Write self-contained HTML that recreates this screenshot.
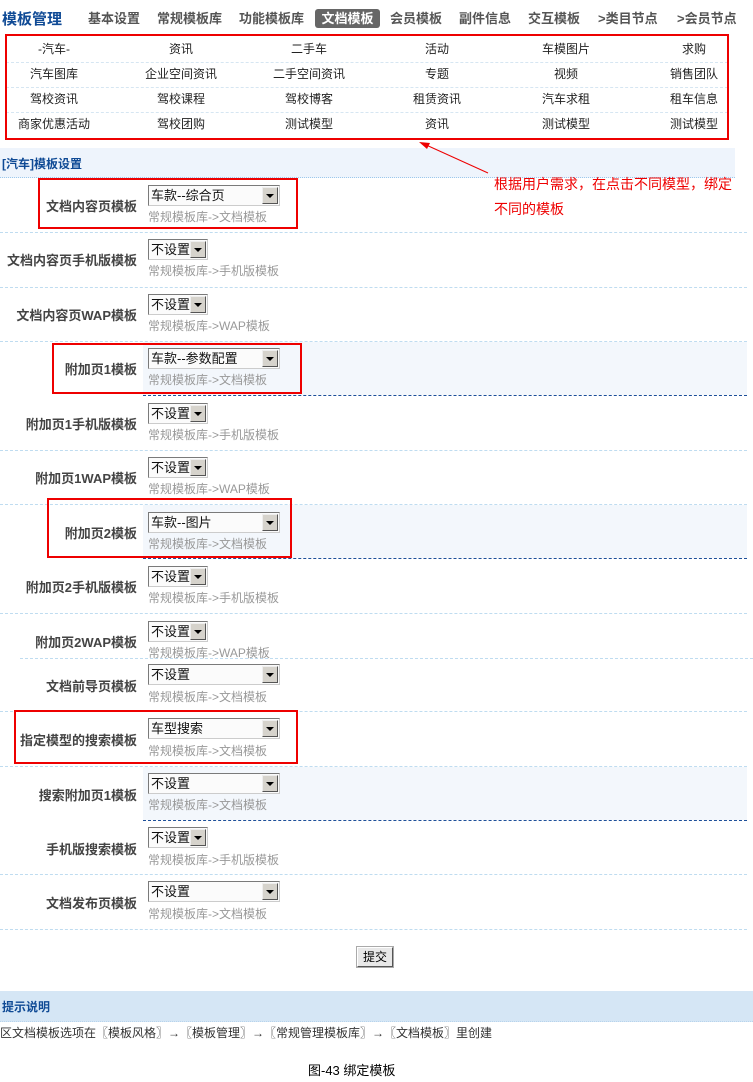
<!DOCTYPE html>
<html><head><meta charset="utf-8"><style>
*{margin:0;padding:0;box-sizing:border-box}
body{width:753px;height:1082px;position:relative;background:#fff;font-family:"Liberation Sans","Noto Sans CJK SC","WenQuanYi Zen Hei",sans-serif;font-size:12px;color:#333;overflow:hidden}
.a{position:absolute;white-space:nowrap}
.tab{position:absolute;top:9px;font-weight:bold;color:#555;font-size:13px;line-height:19px}
.g{position:absolute;width:128px;text-align:center;font-size:12px;color:#222;line-height:25px}
.gl{position:absolute;left:6px;width:722px;border-top:1px dashed #d6e6f2}
.lab{position:absolute;right:616px;font-weight:bold;color:#444;font-size:13px;text-align:right;white-space:nowrap}
.sel{position:absolute;left:148px;height:21px;border:1px solid #7a7a7a;border-right-color:#ccc;border-bottom-color:#ccc;background:#fbfbfb;font-size:13px;color:#111;line-height:19px;padding-left:2px;overflow:hidden}
.sel i{position:absolute;right:1px;top:1px;width:16px;height:17px;background:#d6d3cc;border:1px solid;border-color:#eee #555 #555 #eee}
.sel i:after{content:"";position:absolute;left:3px;top:6px;border-left:4px solid transparent;border-right:4px solid transparent;border-top:4px solid #000}
.hint{position:absolute;left:148px;color:#999;font-size:12px}
.div{position:absolute;left:0;width:747px;border-top:1px dashed #bfdcf0}
.dk{border-top:1px dashed #1d4f99}
.sh{position:absolute;left:143px;width:604px;background:#f3f7fc}
.rb{position:absolute;border:2px solid #e00}
</style></head><body>
<div class="a" style="left:2px;top:8px;font-size:15px;font-weight:bold;color:#0f4a95">模板管理</div>
<div class="tab" style="left:88px">基本设置</div>
<div class="tab" style="left:157px">常规模板库</div>
<div class="tab" style="left:239px">功能模板库</div>
<div class="tab" style="left:315px;width:65px;background:#666;color:#fff;border-radius:3px;text-align:center;top:9px">文档模板</div>
<div class="tab" style="left:390px">会员模板</div>
<div class="tab" style="left:459px">副件信息</div>
<div class="tab" style="left:528px">交互模板</div>
<div class="tab" style="left:598px">&gt;类目节点</div>
<div class="tab" style="left:677px">&gt;会员节点</div>

<div class="gl" style="top:62px"></div><div class="gl" style="top:87px"></div><div class="gl" style="top:112px"></div>
<div class="rb" style="left:5px;top:34px;width:724px;height:106px"></div>
<div style="position:absolute;top:37px;left:0">
<div class="g" style="left:-10px;top:0">-汽车-</div><div class="g" style="left:117px;top:0">资讯</div><div class="g" style="left:245px;top:0">二手车</div><div class="g" style="left:373px;top:0">活动</div><div class="g" style="left:502px;top:0">车模图片</div><div class="g" style="left:630px;top:0">求购</div>
<div class="g" style="left:-10px;top:25px">汽车图库</div><div class="g" style="left:117px;top:25px">企业空间资讯</div><div class="g" style="left:245px;top:25px">二手空间资讯</div><div class="g" style="left:373px;top:25px">专题</div><div class="g" style="left:502px;top:25px">视频</div><div class="g" style="left:630px;top:25px">销售团队</div>
<div class="g" style="left:-10px;top:50px">驾校资讯</div><div class="g" style="left:117px;top:50px">驾校课程</div><div class="g" style="left:245px;top:50px">驾校博客</div><div class="g" style="left:373px;top:50px">租赁资讯</div><div class="g" style="left:502px;top:50px">汽车求租</div><div class="g" style="left:630px;top:50px">租车信息</div>
<div class="g" style="left:-10px;top:75px">商家优惠活动</div><div class="g" style="left:117px;top:75px">驾校团购</div><div class="g" style="left:245px;top:75px">测试模型</div><div class="g" style="left:373px;top:75px">资讯</div><div class="g" style="left:502px;top:75px">测试模型</div><div class="g" style="left:630px;top:75px">测试模型</div>
</div>

<div class="a" style="left:0;top:148px;width:735px;height:30px;background:#eef4fc;border-bottom:1px dotted #9cc8ec"></div>
<div class="a" style="left:2px;top:155px;font-weight:bold;color:#0f4a95;font-size:12px">[汽车]模板设置</div>

<svg style="position:absolute;left:0;top:0" width="753" height="300"><line x1="488" y1="173" x2="424" y2="144" stroke="#e00" stroke-width="1"/><polygon points="419,142 430,143 427,149" fill="#e00"/></svg>
<div class="a" style="left:494px;top:172px;color:#e00;font-size:14px;line-height:25px">根据用户需求，在点击不同模型，绑定<br>不同的模板</div>

<div class="sh" style="top:342px;height:53px"></div>
<div class="sh" style="top:505px;height:53px"></div>
<div class="sh" style="top:767px;height:53px"></div>

<div class="div" style="top:232px"></div><div class="div" style="top:287px"></div><div class="div" style="top:341px"></div>
<div class="div dk" style="top:395px;left:143px;width:604px"></div><div class="div" style="top:450px"></div><div class="div" style="top:504px"></div>
<div class="div dk" style="top:558px;left:143px;width:604px"></div><div class="div" style="top:613px"></div><div class="div" style="top:658px;left:20px;width:733px"></div>
<div class="div" style="top:711px"></div><div class="div" style="top:766px"></div><div class="div dk" style="top:820px;left:143px;width:604px"></div>
<div class="div" style="top:874px"></div><div class="div" style="top:929px"></div>

<div class="lab" style="top:196px">文档内容页模板</div><div class="sel" style="top:185px;width:132px">车款--综合页<i></i></div><div class="hint" style="top:208px">常规模板库->文档模板</div>
<div class="lab" style="top:250px">文档内容页手机版模板</div><div class="sel" style="top:239px;width:60px">不设置<i></i></div><div class="hint" style="top:262px">常规模板库->手机版模板</div>
<div class="lab" style="top:305px">文档内容页WAP模板</div><div class="sel" style="top:294px;width:60px">不设置<i></i></div><div class="hint" style="top:317px">常规模板库->WAP模板</div>
<div class="lab" style="top:359px">附加页1模板</div><div class="sel" style="top:348px;width:132px">车款--参数配置<i></i></div><div class="hint" style="top:371px">常规模板库->文档模板</div>
<div class="lab" style="top:414px">附加页1手机版模板</div><div class="sel" style="top:403px;width:60px">不设置<i></i></div><div class="hint" style="top:426px">常规模板库->手机版模板</div>
<div class="lab" style="top:468px">附加页1WAP模板</div><div class="sel" style="top:457px;width:60px">不设置<i></i></div><div class="hint" style="top:480px">常规模板库->WAP模板</div>
<div class="lab" style="top:523px">附加页2模板</div><div class="sel" style="top:512px;width:132px">车款--图片<i></i></div><div class="hint" style="top:535px">常规模板库->文档模板</div>
<div class="lab" style="top:577px">附加页2手机版模板</div><div class="sel" style="top:566px;width:60px">不设置<i></i></div><div class="hint" style="top:589px">常规模板库->手机版模板</div>
<div class="lab" style="top:632px">附加页2WAP模板</div><div class="sel" style="top:621px;width:60px">不设置<i></i></div><div class="hint" style="top:644px">常规模板库->WAP模板</div>
<div class="lab" style="top:676px">文档前导页模板</div><div class="sel" style="top:664px;width:132px">不设置<i></i></div><div class="hint" style="top:688px">常规模板库->文档模板</div>
<div class="lab" style="top:730px">指定模型的搜索模板</div><div class="sel" style="top:718px;width:132px">车型搜索<i></i></div><div class="hint" style="top:742px">常规模板库->文档模板</div>
<div class="lab" style="top:785px">搜索附加页1模板</div><div class="sel" style="top:773px;width:132px">不设置<i></i></div><div class="hint" style="top:796px">常规模板库->文档模板</div>
<div class="lab" style="top:839px">手机版搜索模板</div><div class="sel" style="top:827px;width:60px">不设置<i></i></div><div class="hint" style="top:851px">常规模板库->手机版模板</div>
<div class="lab" style="top:893px">文档发布页模板</div><div class="sel" style="top:881px;width:132px">不设置<i></i></div><div class="hint" style="top:905px">常规模板库->文档模板</div>

<div class="rb" style="left:38px;top:178px;width:260px;height:51px"></div>
<div class="rb" style="left:52px;top:343px;width:250px;height:51px"></div>
<div class="rb" style="left:47px;top:498px;width:245px;height:60px"></div>
<div class="rb" style="left:14px;top:710px;width:284px;height:54px"></div>

<div class="a" style="left:357px;top:947px;width:36px;height:20px;background:#e8e8e8;border:1px solid;border-color:#fff #555 #555 #fff;outline:1px solid #aaa;text-align:center;line-height:18px;font-size:12px;color:#000">提交</div>
<div class="a" style="left:0;top:991px;width:753px;height:31px;background:#d5e6f5;border-bottom:1px dotted #b8d4ec"></div>
<div class="a" style="left:2px;top:998px;font-weight:bold;color:#0f4a95;font-size:12px">提示说明</div>
<div class="a" style="left:0;top:1024px;font-size:12px;color:#333">区文档模板选项在〖模板风格〗→〖模板管理〗→〖常规管理模板库〗→〖文档模板〗里创建</div>
<div class="a" style="left:308px;top:1060px;font-size:13px;color:#000">图-43 绑定模板</div>
</body></html>
